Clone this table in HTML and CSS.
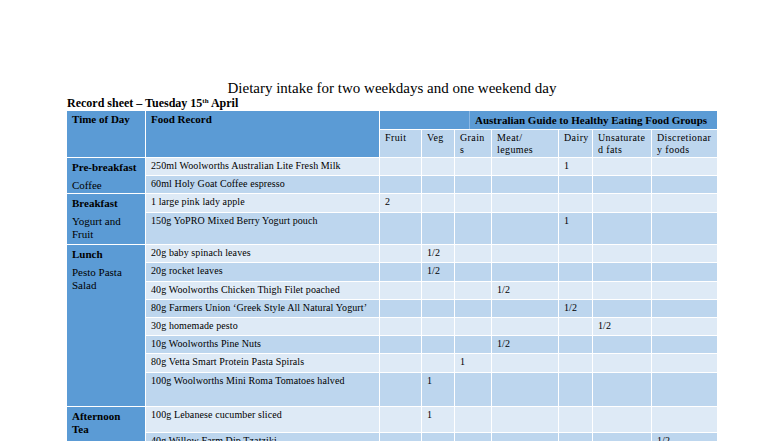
FILE: index.html
```html
<!DOCTYPE html>
<html>
<head>
<meta charset="utf-8">
<link rel="stylesheet" href="styles.css">
</head>
<body>
<div class="page">
  <h1 class="title">Dietary intake for two weekdays and one weekend day</h1>
  <div class="sheet">Record sheet – Tuesday 15<sup>th</sup> April</div>
  <table class="grid">
    <colgroup>
      <col class="c-time"><col class="c-food"><col class="c-fruit"><col class="c-veg"><col class="c-grain"><col class="c-meat"><col class="c-dairy"><col class="c-unsat"><col class="c-disc">
    </colgroup>
    <thead>
      <tr class="h1">
        <th rowspan="2" class="hd-main">Time of Day</th>
        <th rowspan="2" class="hd-main">Food Record</th>
        <th colspan="7" class="hd-guide"><span>Australian Guide to Healthy Eating Food Groups</span></th>
      </tr>
      <tr class="h2">
        <th>Fruit</th><th>Veg</th><th class="brk">Grains</th><th>Meat/ legumes</th><th>Dairy</th><th class="brk">Unsaturated fats</th><th class="brk">Discretionary foods</th>
      </tr>
    </thead>
    <tbody>
      <tr class="lt">
        <td rowspan="2" class="time"><div class="meal">Pre-breakfast</div><div class="dish">Coffee</div></td>
        <td>250ml Woolworths Australian Lite Fresh Milk</td><td></td><td></td><td></td><td></td><td>1</td><td></td><td></td>
      </tr>
      <tr class="dk">
        <td>60ml Holy Goat Coffee espresso</td><td></td><td></td><td></td><td></td><td></td><td></td><td></td>
      </tr>
      <tr class="lt">
        <td rowspan="2" class="time"><div class="meal">Breakfast</div><div class="dish">Yogurt and Fruit</div></td>
        <td>1 large pink lady apple</td><td>2</td><td></td><td></td><td></td><td></td><td></td><td></td>
      </tr>
      <tr class="dk tall33">
        <td>150g YoPRO Mixed Berry Yogurt pouch</td><td></td><td></td><td></td><td></td><td>1</td><td></td><td></td>
      </tr>
      <tr class="lt">
        <td rowspan="8" class="time"><div class="meal">Lunch</div><div class="dish">Pesto Pasta Salad</div></td>
        <td>20g baby spinach leaves</td><td></td><td>1/2</td><td></td><td></td><td></td><td></td><td></td>
      </tr>
      <tr class="dk">
        <td>20g rocket leaves</td><td></td><td>1/2</td><td></td><td></td><td></td><td></td><td></td>
      </tr>
      <tr class="lt">
        <td>40g Woolworths Chicken Thigh Filet poached</td><td></td><td></td><td></td><td>1/2</td><td></td><td></td><td></td>
      </tr>
      <tr class="dk">
        <td>80g Farmers Union ‘Greek Style All Natural Yogurt’</td><td></td><td></td><td></td><td></td><td>1/2</td><td></td><td></td>
      </tr>
      <tr class="lt">
        <td>30g homemade pesto</td><td></td><td></td><td></td><td></td><td></td><td>1/2</td><td></td>
      </tr>
      <tr class="dk">
        <td>10g Woolworths Pine Nuts</td><td></td><td></td><td></td><td>1/2</td><td></td><td></td><td></td>
      </tr>
      <tr class="lt">
        <td>80g Vetta Smart Protein Pasta Spirals</td><td></td><td></td><td>1</td><td></td><td></td><td></td><td></td>
      </tr>
      <tr class="dk tall35">
        <td>100g Woolworths Mini Roma Tomatoes halved</td><td></td><td>1</td><td></td><td></td><td></td><td></td><td></td>
      </tr>
      <tr class="lt tall26">
        <td rowspan="3" class="time"><div class="meal wrap">Afternoon<br>Tea</div></td>
        <td>100g Lebanese cucumber sliced</td><td></td><td>1</td><td></td><td></td><td></td><td></td><td></td>
      </tr>
      <tr class="dk">
        <td>40g Willow Farm Dip Tzatziki</td><td></td><td></td><td></td><td></td><td></td><td></td><td>1/2</td>
      </tr>
      <tr class="lt">
        <td>&nbsp;</td><td></td><td></td><td></td><td></td><td></td><td></td><td></td>
      </tr>
    </tbody>
  </table>
</div>
</body>
</html>
```

FILE: styles.css
```css
html, body {
  margin: 0;
  padding: 0;
  background: #ffffff;
}
body {
  font-family: "Liberation Serif", "Times New Roman", serif;
  color: #000;
  overflow: hidden;
  height: 441px;
}
.page {
  padding-top: 79px;
}
.title {
  margin: 0;
  font-weight: normal;
  font-size: 15px;
  line-height: 18px;
  text-align: center;
}
.sheet {
  margin-left: 67px;
  font-weight: bold;
  font-size: 12px;
  line-height: 13px;
}
.sheet sup {
  font-size: 7px;
  line-height: 0;
  vertical-align: 4px;
}
.grid {
  margin-left: 66px;
  border-collapse: collapse;
  table-layout: fixed;
  width: 651px;
  font-size: 10px;
}
.c-time { width: 79px; }
.c-food { width: 234px; }
.c-fruit { width: 42px; }
.c-veg { width: 33px; }
.c-grain { width: 37px; }
.c-meat { width: 67px; }
.c-dairy { width: 34px; }
.c-unsat { width: 59px; }
.c-disc { width: 66px; }

.grid th, .grid td {
  border: 1px solid #ffffff;
  vertical-align: top;
  text-align: left;
  padding: 2px 4px 0 5px;
  line-height: 12px;
}
.grid tbody td {
  letter-spacing: 0.1px;
}
.grid thead .hd-main {
  background: #5b9bd5;
  font-weight: bold;
  font-size: 11px;
  line-height: 14px;
  padding-top: 1px;
  height: 45px;
}
.grid thead .hd-guide {
  background: #5b9bd5;
  font-weight: bold;
  font-size: 11px;
  line-height: 14px;
  padding: 0 0 0 89px;
  height: 18px;
}
.hd-guide span {
  display: block;
  border-left: 1px solid #8bb8e4;
  padding: 2px 0 2px 5px;
}
.grid .h2 th {
  background: #bdd6ee;
  font-weight: normal;
  height: 25px;
  padding: 2px 5px 0 5px;
  letter-spacing: 0.4px;
}
.grid .h2 th.brk {
  word-break: break-all;
}
.grid tr.lt td { background: #deeaf6; }
.grid tr.dk td { background: #bdd6ee; }
.grid tbody td { height: 15.2px; }
.grid tr.tall33 td { height: 29.7px; }
.grid tr.tall35 td { height: 31.4px; }
.grid tr.tall26 td { height: 23px; }
.grid tr td.time {
  background: #5b9bd5;
  font-size: 11px;
  line-height: 13px;
  padding-top: 3px;
  letter-spacing: 0;
}
.meal {
  font-weight: bold;
  height: 18px;
}
.meal.wrap {
  height: auto;
}
.dish {
  font-weight: normal;
}
```
